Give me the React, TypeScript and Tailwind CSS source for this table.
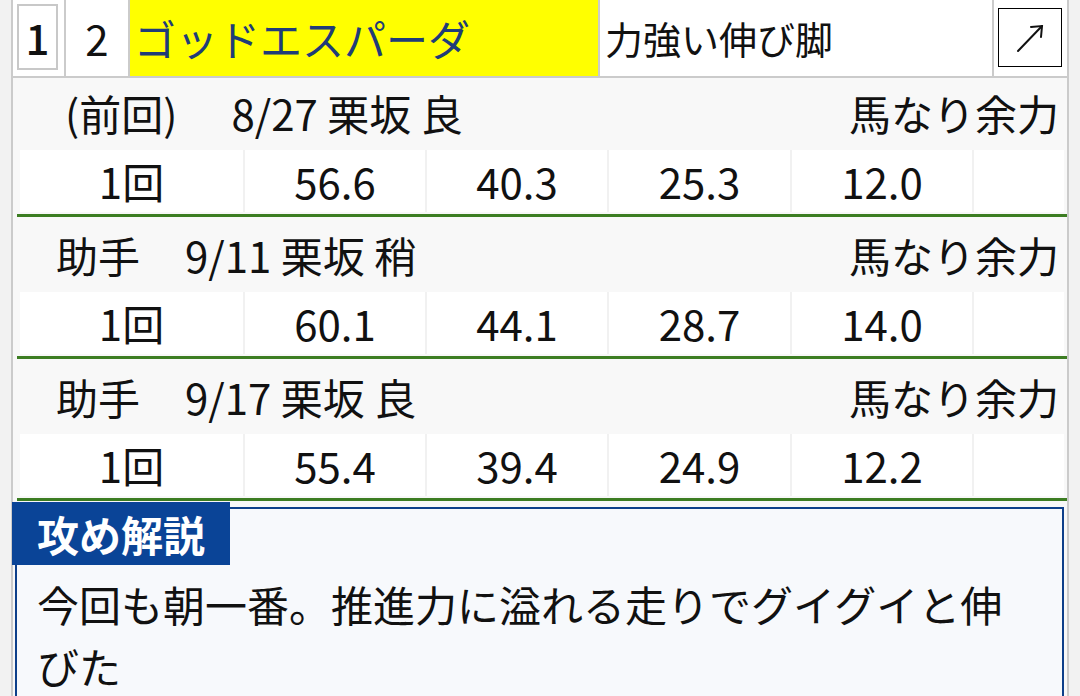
const blocks = [
  {
    who: "(前回)",
    when: "8/27 栗坂 良",
    indent: "pl-[52px]",
    gap: "ml-[12px]",
    note: "馬なり余力",
    times: ["1回", "56.6", "40.3", "25.3", "12.0", ""],
  },
  {
    who: "助手",
    when: "9/11 栗坂 稍",
    indent: "pl-[43px]",
    gap: "ml-[3px]",
    note: "馬なり余力",
    times: ["1回", "60.1", "44.1", "28.7", "14.0", ""],
  },
  {
    who: "助手",
    when: "9/17 栗坂 良",
    indent: "pl-[43px]",
    gap: "ml-[3px]",
    note: "馬なり余力",
    times: ["1回", "55.4", "39.4", "24.9", "12.2", ""],
  },
];

const App = () => {
  return (
    <div className="min-h-screen bg-[#f2f2f2] px-[11px] font-['Noto_Sans_CJK_JP',sans-serif] text-[#111]">
      <div className="min-h-[696px] border-x-2 border-[#cbcbcb] bg-[#f8f8f8]">
        {/* header */}
        <div className="flex h-[78px] border-b-2 border-[#cbcbcb] bg-white">
          <div className="w-[51px] pl-[4px] pt-[4px]">
            <div className="flex h-[66px] w-[41px] items-center justify-center border-2 border-[#c8c8c8] text-[42px] font-medium leading-none">
              1
            </div>
          </div>
          <div className="flex w-[64px] items-center justify-center border-l-2 border-[#cbcbcb] text-[42px] leading-none">
            2
          </div>
          <div className="flex w-[470px] items-center border-l-2 border-[#cbcbcb] bg-[#ffff00] pl-[4px] text-[42px] leading-none text-[#203c78]">
            ゴッドエスパーダ
          </div>
          <div className="flex w-[394px] items-center border-l-2 border-[#cbcbcb] pl-[5px] text-[38px] leading-none">
            力強い伸び脚
          </div>
          <div className="flex-1 border-l-2 border-[#cbcbcb] pl-[4px] pt-[8px]">
            <div className="flex h-[59px] w-[64px] items-center justify-center border border-black">
              <svg width="28" height="30" viewBox="0 0 28 30" fill="none" stroke="#111" strokeWidth="2" strokeLinecap="round">
                <path d="M2 28 L26 3" />
                <path d="M15 4 L26 3 L25 14" />
              </svg>
            </div>
          </div>
        </div>

        {/* workouts */}
        <div className="flex flex-col gap-[3px]">
          {blocks.map((b, i) => (
            <div key={i}>
              <div className={`flex h-[72px] items-center justify-between pb-[2px] pr-[8px] text-[42px] leading-none ${b.indent}`}>
                <span className="flex">
                  <span>{b.who}</span>
                  <span className={`whitespace-pre ${b.gap}`}>　{b.when}</span>
                </span>
                <span>{b.note}</span>
              </div>
              <div className="ml-[7px] mr-[3px] grid h-[62px] grid-cols-[223px_180px_180px_181px_180px_1fr] gap-x-[2px] bg-[#f1f1f1]">
                {b.times.map((t, j) => (
                  <div key={j} className="flex items-center justify-center bg-white text-[42px] leading-none">
                    {t}
                  </div>
                ))}
              </div>
              <div className="ml-[4px] mt-[2px] h-[3px] bg-[#3c7d22]" />
            </div>
          ))}
        </div>

        {/* comment */}
        <div className="ml-[2px] mr-[3px] mt-[6px] border-2 border-[#0d3f8a] bg-[#f7f9fc]">
          <div className="-ml-[5px] -mt-[7px] h-[63px] w-fit bg-[#0a4497] px-[25px] text-[42px] font-bold leading-[63px] text-white">
            攻め解説
          </div>
          <p className="px-[20px] pb-[20px] pt-[8px] text-[42px] leading-[62px]">
            今回も朝一番。推進力に溢れる走りでグイグイと伸びた
          </p>
        </div>
      </div>
    </div>
  );
};

export default App;
